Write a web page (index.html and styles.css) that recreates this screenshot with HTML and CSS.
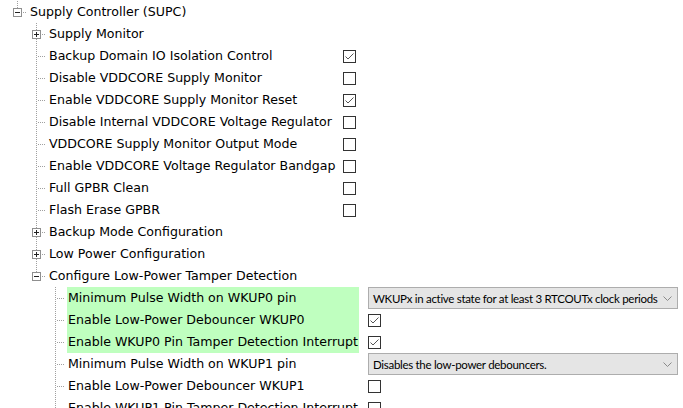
FILE: index.html
```html
<!DOCTYPE html>
<html>
<head>
<meta charset="utf-8">
<link rel="stylesheet" href="styles.css">
</head>
<body>
<div class="tree">
  <div class="row">
    <span class="cn up hasbox"><svg class="box" width="9" height="9" viewBox="0 0 9 9"><rect x="0.5" y="0.5" width="8" height="8" fill="#fff" stroke="#8f8f8f"/><line x1="2" y1="4.5" x2="7" y2="4.5" stroke="#222"/></svg></span>
    <span class="label">Supply Controller (SUPC)</span>
  </div>

  <div class="row">
    <span class="g"></span>
    <span class="cn full hasbox"><svg class="box" width="9" height="9" viewBox="0 0 9 9"><rect x="0.5" y="0.5" width="8" height="8" fill="#fff" stroke="#8f8f8f"/><line x1="2" y1="4.5" x2="7" y2="4.5" stroke="#222"/><line x1="4.5" y1="2" x2="4.5" y2="7" stroke="#222"/></svg></span>
    <span class="label l1">Supply Monitor</span>
  </div>
  <div class="row">
    <span class="g"></span><span class="cn full"></span>
    <span class="label l1">Backup Domain IO Isolation Control</span>
    <svg class="chk" width="13" height="13" viewBox="0 0 13 13"><rect x="0.5" y="0.5" width="12" height="12" fill="#fff" stroke="#333"/><polyline points="2.5,6.5 5,9 10.5,3.5" fill="none" stroke="#555"/></svg>
  </div>
  <div class="row">
    <span class="g"></span><span class="cn full"></span>
    <span class="label l1">Disable VDDCORE Supply Monitor</span>
    <svg class="chk" width="13" height="13" viewBox="0 0 13 13"><rect x="0.5" y="0.5" width="12" height="12" fill="#fff" stroke="#333"/></svg>
  </div>
  <div class="row">
    <span class="g"></span><span class="cn full"></span>
    <span class="label l1">Enable VDDCORE Supply Monitor Reset</span>
    <svg class="chk" width="13" height="13" viewBox="0 0 13 13"><rect x="0.5" y="0.5" width="12" height="12" fill="#fff" stroke="#333"/><polyline points="2.5,6.5 5,9 10.5,3.5" fill="none" stroke="#555"/></svg>
  </div>
  <div class="row">
    <span class="g"></span><span class="cn full"></span>
    <span class="label l1">Disable Internal VDDCORE Voltage Regulator</span>
    <svg class="chk" width="13" height="13" viewBox="0 0 13 13"><rect x="0.5" y="0.5" width="12" height="12" fill="#fff" stroke="#333"/></svg>
  </div>
  <div class="row">
    <span class="g"></span><span class="cn full"></span>
    <span class="label l1">VDDCORE Supply Monitor Output Mode</span>
    <svg class="chk" width="13" height="13" viewBox="0 0 13 13"><rect x="0.5" y="0.5" width="12" height="12" fill="#fff" stroke="#333"/></svg>
  </div>
  <div class="row">
    <span class="g"></span><span class="cn full"></span>
    <span class="label l1">Enable VDDCORE Voltage Regulator Bandgap</span>
    <svg class="chk" width="13" height="13" viewBox="0 0 13 13"><rect x="0.5" y="0.5" width="12" height="12" fill="#fff" stroke="#333"/></svg>
  </div>
  <div class="row">
    <span class="g"></span><span class="cn full"></span>
    <span class="label l1">Full GPBR Clean</span>
    <svg class="chk" width="13" height="13" viewBox="0 0 13 13"><rect x="0.5" y="0.5" width="12" height="12" fill="#fff" stroke="#333"/></svg>
  </div>
  <div class="row">
    <span class="g"></span><span class="cn full"></span>
    <span class="label l1">Flash Erase GPBR</span>
    <svg class="chk" width="13" height="13" viewBox="0 0 13 13"><rect x="0.5" y="0.5" width="12" height="12" fill="#fff" stroke="#333"/></svg>
  </div>
  <div class="row">
    <span class="g"></span>
    <span class="cn full hasbox"><svg class="box" width="9" height="9" viewBox="0 0 9 9"><rect x="0.5" y="0.5" width="8" height="8" fill="#fff" stroke="#8f8f8f"/><line x1="2" y1="4.5" x2="7" y2="4.5" stroke="#222"/><line x1="4.5" y1="2" x2="4.5" y2="7" stroke="#222"/></svg></span>
    <span class="label l1">Backup Mode Configuration</span>
  </div>
  <div class="row">
    <span class="g"></span>
    <span class="cn full hasbox"><svg class="box" width="9" height="9" viewBox="0 0 9 9"><rect x="0.5" y="0.5" width="8" height="8" fill="#fff" stroke="#8f8f8f"/><line x1="2" y1="4.5" x2="7" y2="4.5" stroke="#222"/><line x1="4.5" y1="2" x2="4.5" y2="7" stroke="#222"/></svg></span>
    <span class="label l1">Low Power Configuration</span>
  </div>
  <div class="row">
    <span class="g"></span>
    <span class="cn up hasbox"><svg class="box" width="9" height="9" viewBox="0 0 9 9"><rect x="0.5" y="0.5" width="8" height="8" fill="#fff" stroke="#8f8f8f"/><line x1="2" y1="4.5" x2="7" y2="4.5" stroke="#222"/></svg></span>
    <span class="label l1">Configure Low-Power Tamper Detection</span>
  </div>

  <div class="row">
    <span class="g"></span><span class="g"></span><span class="cn full"></span>
    <span class="label l2 hl">Minimum Pulse Width on WKUP0 pin</span>
    <div class="select"><span class="sel-text">WKUPx in active state for at least 3 RTCOUTx clock periods</span><svg class="chev" width="9" height="5" viewBox="0 0 9 5"><polyline points="0.5,0.5 4.5,4.5 8.5,0.5" fill="none" stroke="#8a8a8a"/></svg></div>
  </div>
  <div class="row">
    <span class="g"></span><span class="g"></span><span class="cn full"></span>
    <span class="label l2 hl">Enable Low-Power Debouncer WKUP0</span>
    <svg class="chk" width="13" height="13" viewBox="0 0 13 13"><rect x="0.5" y="0.5" width="12" height="12" fill="#fff" stroke="#333"/><polyline points="2.5,6.5 5,9 10.5,3.5" fill="none" stroke="#555"/></svg>
  </div>
  <div class="row">
    <span class="g"></span><span class="g"></span><span class="cn full"></span>
    <span class="label l2 hl">Enable WKUP0 Pin Tamper Detection Interrupt</span>
    <svg class="chk" width="13" height="13" viewBox="0 0 13 13"><rect x="0.5" y="0.5" width="12" height="12" fill="#fff" stroke="#333"/><polyline points="2.5,6.5 5,9 10.5,3.5" fill="none" stroke="#555"/></svg>
  </div>
  <div class="row">
    <span class="g"></span><span class="g"></span><span class="cn full"></span>
    <span class="label l2">Minimum Pulse Width on WKUP1 pin</span>
    <div class="select"><span class="sel-text">Disables the low-power debouncers.</span><svg class="chev" width="9" height="5" viewBox="0 0 9 5"><polyline points="0.5,0.5 4.5,4.5 8.5,0.5" fill="none" stroke="#8a8a8a"/></svg></div>
  </div>
  <div class="row">
    <span class="g"></span><span class="g"></span><span class="cn full"></span>
    <span class="label l2">Enable Low-Power Debouncer WKUP1</span>
    <svg class="chk" width="13" height="13" viewBox="0 0 13 13"><rect x="0.5" y="0.5" width="12" height="12" fill="#fff" stroke="#333"/></svg>
  </div>
  <div class="row">
    <span class="g"></span><span class="g"></span><span class="cn full"></span>
    <span class="label l2">Enable WKUP1 Pin Tamper Detection Interrupt</span>
    <svg class="chk" width="13" height="13" viewBox="0 0 13 13"><rect x="0.5" y="0.5" width="12" height="12" fill="#fff" stroke="#333"/></svg>
  </div>
</div>
</body>
</html>
```
FILE: styles.css
```css
html, body {
  margin: 0;
  padding: 0;
  background: #fff;
  overflow: hidden;
}
.tree {
  padding: 1px 0 0 8px;
  font-family: "DejaVu Sans", sans-serif;
  font-size: 12.6px;
  color: #000;
}
.row {
  display: flex;
  align-items: center;
  height: 22px;
}
.g {
  flex: none;
  width: 19px;
  height: 22px;
}
.cn {
  flex: none;
  width: 19px;
  height: 22px;
  position: relative;
  box-sizing: border-box;
  padding: 7px 0 0 5px;
}
.cn::before {
  content: "";
  position: absolute;
  left: 9px;
  top: 0;
  width: 1px;
  height: 22px;
  background: linear-gradient(#a0a0a0 50%, transparent 50%) 0 0 / 1px 2px repeat-y;
}
.cn.up::before {
  height: 8px;
}
.cn::after {
  content: "";
  position: absolute;
  left: 11px;
  top: 11px;
  width: 8px;
  height: 1px;
  background: linear-gradient(to right, #a0a0a0 50%, transparent 50%) 0 0 / 2px 1px repeat-x;
}
.cn.hasbox::after {
  left: 15px;
  width: 4px;
}
.box {
  display: block;
  position: relative;
  z-index: 1;
}
.label {
  flex: none;
  box-sizing: border-box;
  margin-left: 2px;
  padding-left: 1px;
  height: 22px;
  line-height: 22px;
  white-space: nowrap;
}
.l1 {
  width: 295px;
}
.l2 {
  width: 292px;
  margin-right: 9px;
}
.hl {
  background: #bfffbf;
}
.chk {
  flex: none;
  display: block;
}
.select {
  flex: none;
  box-sizing: border-box;
  width: 310px;
  height: 22px;
  background: #e5e5e5;
  border: 1px solid #adadad;
  display: flex;
  align-items: center;
  justify-content: space-between;
  padding: 0 5px 0 4px;
  font-family: "Lato", "Open Sans", sans-serif;
  font-size: 11.5px;
  letter-spacing: -0.3px;
  color: #000;
}
.sel-text {
  white-space: nowrap;
}
.chev {
  display: block;
  flex: none;
}
```
